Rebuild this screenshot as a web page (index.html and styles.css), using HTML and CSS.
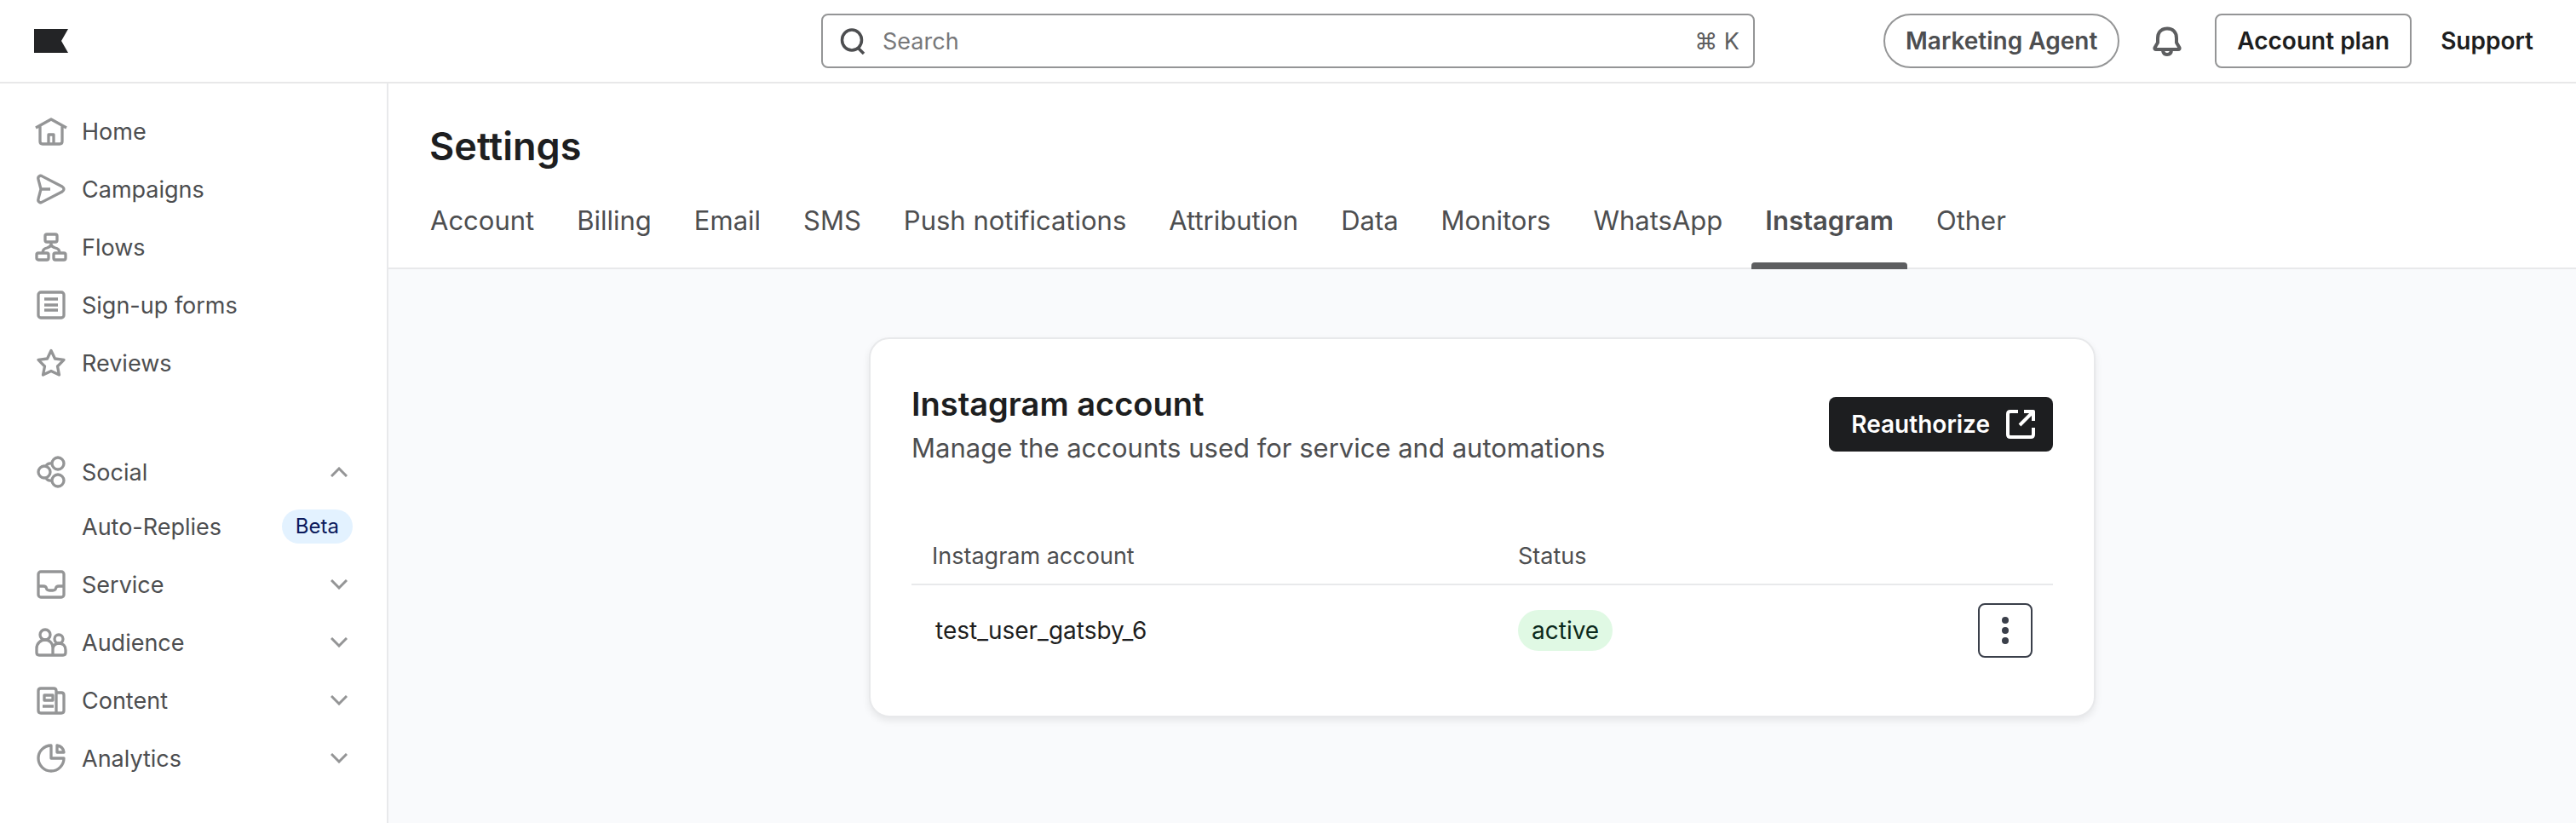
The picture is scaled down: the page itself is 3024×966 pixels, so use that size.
FILE: index.html
```
<!DOCTYPE html>
<html lang="en">
<head>
  <meta charset="UTF-8" />
  <meta name="viewport" content="width=device-width, initial-scale=1.0"/>
  <title>Settings – Instagram</title>
  <link rel="stylesheet" href="styles.css">
</head>
<body>

<header class="topbar">
  <a class="logo" href="#" aria-label="Home page">
    <svg width="40" height="28" viewBox="0 0 40 28"><path d="M0 0h40l-8 14 8 14H0z" fill="#232426"/></svg>
  </a>
  <label class="search">
    <svg width="30" height="32" viewBox="0 0 30 32" fill="none" stroke="#4d4e50" stroke-width="3.500"><ellipse cx="14" cy="15" rx="11.500" ry="12"/><path d="M21 24l7 7"/></svg>
    <input type="text" placeholder="Search" aria-label="Search">
    <span class="shortcut">⌘ K</span>
  </label>
  <div class="actions">
    <button class="agent-btn" type="button">Marketing Agent</button>
    <button class="bell-btn" type="button" aria-label="Notifications">
      <svg class="icon" width="40" height="40" viewBox="0 0 40 40"><path d="M9 17C9 10 13 5.500 20 5.500S31 10 31 17v5l3.500 6q.5 2-1.500 2H7q-2 0-1.500-2L9 22zM15 30c0 4 2 6 5 6s5-2 5-6"/></svg>
    </button>
    <button class="plan-btn" type="button">Account plan</button>
    <a class="support" href="#">Support</a>
  </div>
</header>

<div class="layout">
  <nav class="sidebar">
    <a href="#">
      <svg class="icon" width="40" height="40" viewBox="0 0 40 40"><path d="M2 16L20 6l18 10M7 14v18q0 3 3 3h20q3 0 3-3V14M17 35V24h6v11"/></svg>
      <span>Home</span>
    </a>
    <a href="#">
      <svg class="icon" width="40" height="40" viewBox="0 0 40 40"><path d="M9 4.600l24 12.400q4 3 0 6L9 35.400c-2 1-5-1-4-4l3-11.400L5 8.600c-1-3 2-5 4-4zM8 20h11"/></svg>
      <span>Campaigns</span>
    </a>
    <a href="#">
      <svg class="icon" width="40" height="40" viewBox="0 0 40 40"><rect x="13" y="5" width="14" height="9" rx="2"/><rect x="3" y="27" width="14" height="8" rx="2"/><rect x="23" y="27" width="14" height="8" rx="2"/><path d="M20 14v3M20 17q-1 3-5 4-5 1-5 6M20 17q1 3 5 4 5 1 5 6"/></svg>
      <span>Flows</span>
    </a>
    <a href="#">
      <svg class="icon" width="40" height="40" viewBox="0 0 40 40"><rect x="5" y="5" width="30" height="30" rx="3"/><path d="M12 13h16M12 20h16M12 26h16"/></svg>
      <span>Sign-up forms</span>
    </a>
    <a href="#">
      <svg class="icon" width="40" height="40" viewBox="0 0 40 40"><path d="M20 5.500l4.500 9.500 10.500 1.300-7.500 7.700 2 10-9.500-4.500-9.500 4.500 2-10L5 16.300l10.500-1.300z"/></svg>
      <span>Reviews</span>
    </a>
    <button class="group first" type="button" aria-expanded="true">
      <svg class="icon" width="40" height="40" viewBox="0 0 40 40"><circle cx="12" cy="20" r="7"/><circle cx="28" cy="10" r="7"/><circle cx="28" cy="30" r="7"/><path d="M14 13q2-4 7-3M14 27q2 4 7 3"/></svg>
      <span>Social</span>
      <svg class="chevron" width="20" height="12" viewBox="0 0 20 12"><path d="M1 11l9-9 9 9"/></svg>
    </button>
    <a class="sub" href="#">
      <span>Auto-Replies</span>
      <span class="beta">Beta</span>
    </a>
    <button class="group" type="button" aria-expanded="false">
      <svg class="icon" width="40" height="40" viewBox="0 0 40 40"><rect x="5" y="5" width="30" height="30" rx="3"/><path d="M5 22h6q3 0 3.500 2.500T18 27h4q3 0 3.500-2.500T29 22h6"/></svg>
      <span>Service</span>
      <svg class="chevron" width="20" height="12" viewBox="0 0 20 12"><path d="M1 1l9 9 9-9"/></svg>
    </button>
    <button class="group" type="button" aria-expanded="false">
      <svg class="icon" width="40" height="40" viewBox="0 0 40 40"><circle cx="13" cy="11" r="6"/><circle cx="29" cy="16" r="5"/><path d="M22 35V26c0-5-4-9-9-9s-10 4-10 10v5q0 3 3 3h28q3 0 3-3v-3c0-5-3-8-8-8-4 0-7 3-7 7"/></svg>
      <span>Audience</span>
      <svg class="chevron" width="20" height="12" viewBox="0 0 20 12"><path d="M1 1l9 9 9-9"/></svg>
    </button>
    <button class="group" type="button" aria-expanded="false">
      <svg class="icon" width="40" height="40" viewBox="0 0 40 40"><path d="M28 35H8q-3 0-3-3V9q0-3 3-3h15q3 0 3 3v26h6q3 0 3-3V14q0-3-3-3h-6M12 14h10v6H12zM10 27h13"/></svg>
      <span>Content</span>
      <svg class="chevron" width="20" height="12" viewBox="0 0 20 12"><path d="M1 1l9 9 9-9"/></svg>
    </button>
    <button class="group" type="button" aria-expanded="false">
      <svg class="icon" width="40" height="40" viewBox="0 0 40 40"><path d="M20 5a15 15 0 1 0 15 15H20zM27 5v8h8q-1-7-8-8z"/></svg>
      <span>Analytics</span>
      <svg class="chevron" width="20" height="12" viewBox="0 0 20 12"><path d="M1 1l9 9 9-9"/></svg>
    </button>
  </nav>

  <main>
    <div class="page-head">
      <h1>Settings</h1>
      <nav class="tabs">
        <a href="#">Account</a>
        <a href="#">Billing</a>
        <a href="#">Email</a>
        <a href="#">SMS</a>
        <a href="#">Push notifications</a>
        <a href="#">Attribution</a>
        <a href="#">Data</a>
        <a href="#">Monitors</a>
        <a href="#">WhatsApp</a>
        <a class="active" href="#" aria-current="page">Instagram</a>
        <a href="#">Other</a>
      </nav>
    </div>

    <section class="card">
      <div class="card-head">
        <div>
          <h2>Instagram account</h2>
          <p>Manage the accounts used for service and automations</p>
        </div>
        <button class="reauth-btn" type="button">
          Reauthorize
          <svg class="icon" width="40" height="40" viewBox="0 0 40 40"><path d="M17 5H8q-3 0-3 3v24q0 3 3 3h24q3 0 3-3V24M24 5h11v11M34 6L19 21"/></svg>
        </button>
      </div>
      <table>
        <thead>
          <tr>
            <th class="col-account">Instagram account</th>
            <th class="col-status">Status</th>
            <th class="col-menu"></th>
          </tr>
        </thead>
        <tbody>
          <tr>
            <td class="username">test_user_gatsby_6</td>
            <td><span class="status">active</span></td>
            <td class="col-menu">
              <button class="menu-btn" type="button" aria-label="More options">
                <svg width="8" height="32" viewBox="0 0 8 32" fill="#3a3f4a"><circle cx="4" cy="4" r="4"/><circle cx="4" cy="16" r="4"/><circle cx="4" cy="28" r="4"/></svg>
              </button>
            </td>
          </tr>
        </tbody>
      </table>
    </section>
  </main>
</div>

</body>
</html>
```
FILE: styles.css
```
* { box-sizing: border-box; }
body { font-family: Inter, "Liberation Sans", sans-serif; margin: 0; background: #ffffff; color: #1d1e20; font-size: 27px; display: flex; flex-direction: column; min-height: 100vh; }
a { color: inherit; text-decoration: none; }
button { font: inherit; color: inherit; background: none; border: none; padding: 0; cursor: pointer; }
svg { display: block; flex: none; }
.icon { fill: none; stroke: #949596; stroke-width: 3.3; stroke-linejoin: round; }

.topbar { display: grid; grid-template-columns: 1fr 1096px 1fr; align-items: center; height: 98px; padding: 0 40px; border-bottom: 2px solid #e8e8e9; }
.search { display: flex; align-items: center; gap: 20px; height: 64px; padding: 0 16px 0 20px; border: 2px solid #949596; border-radius: 8px; }
.search input { flex: 1; min-width: 0; border: none; outline: none; padding: 0; background: none; font: inherit; }
.search input::placeholder { color: #77787a; opacity: 1; }
.shortcut { color: #5d5e60; }
.actions { display: flex; align-items: center; justify-content: flex-end; padding-right: 10px; font-size: 28px; font-weight: 600; }
.agent-btn { height: 64px; padding: 0 24px; border: 2px solid #949596; border-radius: 32px; color: #4d4e50; }
.bell-btn { margin: 0 36px; }
.bell-btn .icon { stroke: #5d5e60; stroke-width: 4; }
.plan-btn { height: 64px; padding: 0 24px; margin-right: 34px; border: 2px solid #949596; border-radius: 8px; }

.layout { display: flex; flex: 1; }
.sidebar { width: 456px; flex: none; padding: 22px 40px 40px; border-right: 2px solid #e8e9eb; color: #4d4e50; }
.sidebar a, .group { display: flex; align-items: center; gap: 16px; width: 100%; height: 68px; text-align: left; }
.sidebar .first { margin-top: 60px; }
.sidebar .sub { height: 60px; margin-bottom: 4px; padding-left: 56px; justify-content: space-between; }
.chevron { margin-left: auto; margin-right: 6px; fill: none; stroke: #949596; stroke-width: 3; }
.beta { padding: 0 16px; line-height: 40px; border-radius: 20px; background: #e3f2ff; color: #0b1a5c; font-size: 24px; }

main { flex: 1; min-width: 0; background: #f9fafc; }
.page-head { padding: 48px 48px 0; background: #ffffff; border-bottom: 2px solid #e8e9eb; }
h1 { margin: 0; font-size: 45px; line-height: 52px; font-weight: 600; }
.tabs { display: flex; gap: 18px; margin: 12px 0 -2px -15px; color: #4d4e50; font-size: 31px; }
.tabs a { padding: 29px 16px; line-height: 40px; border-bottom: 8px solid transparent; }
.tabs .active { position: relative; font-weight: 600; }
.tabs .active::after { content: ""; position: absolute; left: 0; right: 0; bottom: -8px; height: 8px; border-radius: 4px 4px 0 0; background: #5d5e60; }

.card { width: 1440px; max-width: 100%; margin: 80px auto 0; padding: 48px; border: 2px solid #e8e9eb; border-radius: 24px; background: #ffffff; box-shadow: 0 4px 8px rgba(0, 0, 0, 0.08); }
.card-head { display: flex; align-items: center; justify-content: space-between; }
h2 { margin: 0; font-size: 38px; line-height: 56px; font-weight: 600; }
.card p { margin: 0; font-size: 31px; line-height: 48px; color: #4d4e50; }
.reauth-btn { display: flex; align-items: center; gap: 16px; height: 64px; padding: 0 18px 0 26px; border-radius: 8px; background: #1d1e20; color: #ffffff; font-size: 28px; font-weight: 600; }
.reauth-btn .icon { stroke: #ffffff; stroke-width: 4; }
table { width: 100%; margin-top: 68px; border-collapse: collapse; table-layout: fixed; text-align: left; }
th { height: 68px; padding: 2px 24px 0; border-bottom: 2px solid #e8e9eb; color: #4d4e50; font-weight: 400; }
td { height: 106px; padding: 0 24px; font-size: 28px; }
.col-account { width: 688px; }
.col-menu { text-align: right; }
.username { padding-left: 28px; }
.status { display: inline-block; padding: 0 16px; line-height: 48px; border-radius: 24px; background: #e0f9e4; color: #0c2a1c; }
.menu-btn { display: inline-flex; align-items: center; justify-content: center; width: 64px; height: 64px; border: 2px solid #3a3f4a; border-radius: 8px; vertical-align: middle; }
```
